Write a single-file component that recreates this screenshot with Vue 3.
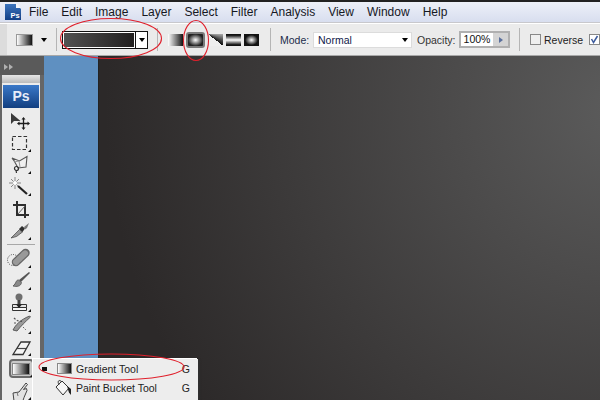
<script setup>
const menus = ['File', 'Edit', 'Image', 'Layer', 'Select', 'Filter', 'Analysis', 'View', 'Window', 'Help'];
</script>

<template>
  <div class="app">
    <div class="menubar">
      <svg class="ps-logo" width="18" height="18" viewBox="0 0 18 18">
        <defs>
          <linearGradient id="logoBlue" x1="0" y1="0" x2="0" y2="1">
            <stop offset="0" stop-color="#3d75bd" />
            <stop offset="1" stop-color="#123f85" />
          </linearGradient>
        </defs>
        <path d="M1 1h11l5 5v11H1z" fill="url(#logoBlue)" />
        <path d="M12 0l5 5h-5z" fill="#f4f6fb" />
        <text x="6.5" y="14.5" class="ps-logo-text">Ps</text>
      </svg>
      <span v-for="m in menus" :key="m" class="menu-item">{{ m }}</span>
    </div>

    <div class="options">
      <div class="grip"></div>
      <div class="tool-preset"></div>
      <span class="arrow preset-arrow"></span>
      <div class="sep"></div>
      <div class="gradient-picker">
        <div class="gradient-swatch"></div>
        <div class="picker-btn"><span class="arrow"></span></div>
      </div>
      <div class="sep sep-b"></div>
      <div class="types">
        <div class="type type-linear"></div>
        <div class="type type-radial"></div>
        <div class="type type-angle"></div>
        <div class="type type-reflected"></div>
        <div class="type type-diamond"></div>
      </div>
      <div class="sep sep-c"></div>
      <span class="label mode-label">Mode:</span>
      <div class="mode-select">
        <span>Normal</span>
        <span class="arrow"></span>
      </div>
      <span class="label opacity-label">Opacity:</span>
      <div class="opacity">
        <span class="opacity-val">100%</span>
        <div class="opacity-btn"></div>
      </div>
      <div class="sep sep-d"></div>
      <span class="check"></span>
      <span class="label check-label">Reverse</span>
      <span class="check checked">
        <svg width="9" height="9" viewBox="0 0 9 9"><path d="M1.5 4l2 3.5L7.5 1" fill="none" stroke="#3c5a9c" stroke-width="1.5" /></svg>
      </span>
    </div>

    <div class="workspace">
      <div class="dock">
        <div class="dock-head"><span class="tri"></span><span class="tri"></span></div>
        <div class="toolbox">
          <div class="toolbox-grip"></div>
          <div class="ps-badge">Ps</div>

          <!-- move -->
          <div class="tool">
            <svg width="30" height="22" viewBox="0 0 30 22">
              <path d="M5 4v11l3-3h6.5z" fill="#3a3a3a" />
              <path d="M17.5 10v9M13 14.5h9" stroke="#1c1c1c" stroke-width="1.3" />
              <path d="M17.5 8l2 2.5h-4zM17.5 21l2-2.5h-4zM11 14.5l2.5-2v4zM24 14.5l-2.5-2v4z" fill="#1c1c1c" />
            </svg>
          </div>
          <!-- marquee -->
          <div class="tool corner">
            <svg width="30" height="22" viewBox="0 0 30 22">
              <rect x="6.5" y="5.5" width="14" height="13" fill="none" stroke="#333" stroke-width="1.2" stroke-dasharray="3.5 2" />
            </svg>
          </div>
          <!-- lasso -->
          <div class="tool corner">
            <svg width="30" height="22" viewBox="0 0 30 22">
              <path d="M6 5l7.5 3L21 3.5l-1 10.5-8 1C10 12 9 8 6 5z" fill="#f0f0f0" stroke="#555" stroke-width="1.1" />
              <path d="M8 9l5-1 1 6" fill="none" stroke="#999" />
              <circle cx="10.5" cy="15.5" r="2" fill="none" stroke="#333" stroke-width="1.2" />
              <path d="M10 17l.5 3" stroke="#333" stroke-width="1.2" />
            </svg>
          </div>
          <!-- wand -->
          <div class="tool corner">
            <svg width="30" height="22" viewBox="0 0 30 22">
              <path d="M9 2v12M3 8h12M5 4l8 8M13 4l-8 8" stroke="#888" stroke-width="1" />
              <circle cx="9" cy="8" r="2" fill="#fff" />
              <path d="M12 11l9 8" stroke="#222" stroke-width="2.2" />
            </svg>
          </div>
          <!-- crop -->
          <div class="tool">
            <svg width="30" height="22" viewBox="0 0 30 22">
              <path d="M7 8h12v13M11 4v14h12" fill="none" stroke="#2e2e2e" stroke-width="2" />
              <path d="M12 17l7-8" stroke="#666" />
            </svg>
          </div>
          <!-- slice -->
          <div class="tool corner">
            <svg width="30" height="22" viewBox="0 0 30 22">
              <path d="M5 19l8.5-8.5 3 2.5-6 4.500z" fill="#999" stroke="#444" stroke-width=".7" />
              <path d="M13 10l3-3 3 2.5-2.5 3.5z" fill="#2e2e2e" />
              <path d="M18 8l5-4-2 5-2 1.5z" fill="#777" />
            </svg>
          </div>

          <div class="divider"></div>

          <!-- healing brush -->
          <div class="tool corner">
            <svg width="30" height="22" viewBox="0 0 30 22">
              <circle cx="7" cy="13" r="5.5" fill="none" stroke="#444" stroke-dasharray="1 1.3" />
              <path d="M10 15L19.5 6" stroke="#666" stroke-width="8.5" stroke-linecap="round" />
              <path d="M10 15L19.5 6" stroke="#999" stroke-width="6" stroke-linecap="round" stroke-dasharray="2 1.5" />
            </svg>
          </div>
          <!-- brush -->
          <div class="tool corner">
            <svg width="30" height="22" viewBox="0 0 30 22">
              <path d="M23 3l1 1-9 9-2-2z" fill="#555" />
              <path d="M12.5 11c-3 0-2 3.500-5.500 6 3.500 1 8 .5 8.500-3.500z" fill="#8a8a8a" stroke="#444" stroke-width=".7" />
            </svg>
          </div>
          <!-- stamp -->
          <div class="tool corner">
            <svg width="30" height="22" viewBox="0 0 30 22">
              <circle cx="13" cy="6" r="3.5" fill="#6e6e6e" />
              <rect x="11.5" y="9" width="3" height="4" fill="#444" />
              <path d="M6.5 13.5h14v3h-14z" fill="#e4e4e4" stroke="#333" />
              <path d="M6.5 16.5h14v3h-14z" fill="#f6f6f6" stroke="#333" />
              <path d="M10 13.5l3 3.5 3-3.5z" fill="#222" />
            </svg>
          </div>
          <!-- history brush -->
          <div class="tool corner">
            <svg width="30" height="22" viewBox="0 0 30 22">
              <path d="M7 17c2.5-5 7-10 16.5-14l1 1C19 9 15 13 11 18z" fill="#999" stroke="#444" stroke-width=".8" />
              <path d="M8 5c3 3 6 3.5 8 3.5M8 10h3" stroke="#555" stroke-width="1.2" stroke-dasharray="2 1.5" fill="none" />
              <path d="M17 14l3 3" stroke="#666" stroke-dasharray="1.5 1" />
            </svg>
          </div>
          <!-- eraser -->
          <div class="tool corner">
            <svg width="30" height="22" viewBox="0 0 30 22">
              <path d="M7 19.5L15 7h9l-7 12.5z" fill="#f5f5f5" stroke="#333" stroke-width="1.3" />
              <path d="M11 13.5h9" stroke="#444" stroke-width="1.2" />
            </svg>
          </div>
          <!-- gradient, the selected one -->
          <div class="tool corner gradient-tool"><div class="gradient-icon"></div></div>
          <!-- smudge -->
          <div class="tool corner">
            <svg width="30" height="22" viewBox="0 0 30 22">
              <path d="M8 22l-1-8 6-1 7-9 1.5 1.5-4 5 3-1 .5 2-3 7-1 3" fill="#e2e2e2" stroke="#444" />
              <path d="M11 13l1 4" stroke="#777" />
            </svg>
          </div>
        </div>
      </div>
      <div class="blue"></div>
      <div class="canvas"></div>
    </div>

    <div class="flyout">
      <div class="fly-row">
        <span class="bullet"></span>
        <div class="fly-gradient"></div>
        <span class="fly-name">Gradient Tool</span>
        <span class="fly-key">G</span>
      </div>
      <div class="fly-row">
        <span class="bullet bullet-off"></span>
        <svg class="fly-bucket" width="17" height="18" viewBox="0 0 17 18">
          <path d="M1 8l6-6 7 7-6 7z" fill="#f6f6f6" stroke="#333" />
          <path d="M7 3C4 0 2 2 4 6" fill="none" stroke="#333" />
          <path d="M12 7l4 3v6l-2-2.5-1-3z" fill="#222" />
        </svg>
        <span class="fly-name">Paint Bucket Tool</span>
        <span class="fly-key">G</span>
      </div>
    </div>

    <svg class="marks" width="600" height="400" viewBox="0 0 600 400">
      <ellipse cx="111" cy="38.5" rx="50.5" ry="20" />
      <ellipse cx="196" cy="40.5" rx="12.5" ry="20" />
      <ellipse cx="111.5" cy="367" rx="72.5" ry="13" />
    </svg>
  </div>
</template>

<style scoped>
.app {
  position: relative;
  width: 600px;
  height: 400px;
  display: flex;
  flex-direction: column;
  overflow: hidden;
  font-family: "Liberation Sans", Arial, sans-serif;
  font-size: 10.5px;
  color: #1a1a1a;
  background: #3a3a3a;
}

.menubar {
  height: 20px;
  flex: none;
  display: flex;
  align-items: center;
  gap: 13px;
  padding-left: 4px;
  border-top: 2px solid #222;
  border-bottom: 1px solid #c8c8cc;
  background: linear-gradient(#edf0f8, #d8deef);
  font-size: 12px;
}

.ps-logo {
  flex: none;
  margin-right: -6px;
}

.ps-logo-text {
  font: bold 7.5px "Liberation Sans", sans-serif;
  fill: #fff;
}

.menu-item {
  color: #16181f;
}

.options {
  height: 31px;
  flex: none;
  display: flex;
  align-items: center;
  background: #ebebeb;
  border-top: 1px solid #fff;
  border-bottom: 1px solid #a8a8a8;
}

.grip {
  width: 7px;
  height: 100%;
  background: #dcdcdc;
}

.tool-preset {
  width: 15px;
  height: 10px;
  margin-left: 9px;
  background: linear-gradient(90deg, #fff, #111);
  border: 1px solid #999;
}

.arrow {
  display: inline-block;
  width: 0;
  height: 0;
  flex: none;
  border-left: 3.5px solid transparent;
  border-right: 3.5px solid transparent;
  border-top: 4px solid #000;
}

.preset-arrow {
  margin-left: 8px;
}

.sep {
  width: 1px;
  height: 23px;
  flex: none;
  background: #b5b5b5;
  margin-left: 9px;
}

.gradient-picker {
  display: flex;
  width: 86px;
  height: 18px;
  flex: none;
  margin-left: 5px;
  box-sizing: border-box;
  border: 1px solid #111;
  background: #fff;
}

.gradient-swatch {
  width: 70px;
  margin: 1px;
  background: linear-gradient(90deg, #525252, #201e1e);
}

.picker-btn {
  flex: 1;
  display: flex;
  align-items: center;
  justify-content: center;
  border-left: 1px solid #111;
}

.sep-b {
  margin-left: 9px;
}

.types {
  display: flex;
  align-items: center;
  gap: 3px;
  margin-left: 10px;
}

.type {
  width: 15px;
  height: 12px;
  flex: none;
}

.type-linear {
  background: linear-gradient(90deg, #fff, #111);
}

.type-radial {
  width: 19px;
  height: 16px;
  box-sizing: border-box;
  background: radial-gradient(ellipse closest-side, #fff, #222 100%);
  border: 2px solid #7a7a7a;
  border-radius: 3px;
}

.type-angle {
  background: conic-gradient(from 90deg at 0 0, #aaa 0deg, #111 38deg, #eee 38deg 90deg);
}

.type-reflected {
  background: linear-gradient(#111 10%, #fff 50%, #111 90%);
}

.type-diamond {
  background: radial-gradient(ellipse closest-side, #fff, #111 85%);
}

.sep-c {
  margin-left: 11px;
}

.label {
  font-size: 10.5px;
  flex: none;
  color: #1c2c4c;
}

.mode-label {
  margin-left: 9px;
  width: 33px;
}

.mode-select {
  width: 99px;
  height: 16px;
  flex: none;
  padding: 0 3px 0 4px;
  box-sizing: border-box;
  display: flex;
  align-items: center;
  justify-content: space-between;
  background: #fff;
  border: 1px solid #dcdcdc;
  color: #10204a;
}

.opacity-label {
  margin-left: 5px;
  width: 38px;
  color: #333;
}

.opacity {
  display: flex;
  width: 51px;
  height: 17px;
  flex: none;
  margin-left: 4px;
  box-sizing: border-box;
  background: #fff;
  border: 2px solid #b0b0b0;
}

.opacity-val {
  flex: 1;
  text-align: center;
  line-height: 13px;
  color: #111;
}

.opacity-btn {
  width: 15px;
  background: #d4d4d4;
  position: relative;
}

.opacity-btn::after {
  content: "";
  position: absolute;
  left: 6px;
  top: 4px;
  border-left: 4px solid #5a6f9c;
  border-top: 3px solid transparent;
  border-bottom: 3px solid transparent;
}

.sep-d {
  margin-left: 9px;
}

.check {
  width: 9px;
  height: 9px;
  margin-left: 10px;
  flex: none;
  background: #efefef;
  border: 1px solid #888;
}

.check-label {
  margin-left: 3px;
  width: 45px;
  color: #222;
}

.checked {
  margin-left: 0;
  display: flex;
  background: #fff;
}

.workspace {
  flex: 1;
  display: flex;
  min-height: 0;
}

.dock {
  width: 44px;
  flex: none;
  display: flex;
  flex-direction: column;
  background: #666;
}

.dock-head {
  height: 19px;
  flex: none;
  display: flex;
  align-items: center;
  gap: 1px;
  padding: 3px 0 0 4px;
  box-sizing: border-box;
  background: #5a5a5a;
}

.tri {
  border-left: 4px solid #b0b0b0;
  border-top: 3.5px solid transparent;
  border-bottom: 3.5px solid transparent;
}

.toolbox {
  width: 38px;
  flex: 1;
  margin-left: 2px;
  background: #ececec;
  display: flex;
  flex-direction: column;
  align-items: center;
}

.toolbox-grip {
  width: 100%;
  height: 8px;
  flex: none;
  background: linear-gradient(#e6e6e6, #bbb);
}

.ps-badge {
  width: 36px;
  height: 23px;
  flex: none;
  margin-top: 2px;
  margin-bottom: 1px;
  background: linear-gradient(#3a78c8, #123f80);
  color: #e6ecf8;
  font: bold 14px "Liberation Sans", sans-serif;
  text-align: center;
  line-height: 23px;
}

.tool {
  width: 30px;
  height: 22px;
  flex: none;
  display: flex;
  align-items: center;
  justify-content: center;
  position: relative;
}

.corner::after {
  content: "";
  position: absolute;
  right: 5px;
  bottom: 1px;
  border-left: 3px solid transparent;
  border-bottom: 3px solid #111;
}

.divider {
  width: 28px;
  height: 1px;
  flex: none;
  background: #a8a8a8;
  margin: 3px 0 2px;
}

.gradient-tool {
  height: 19px;
  width: 25px;
  margin: 2px 0 1px;
  box-sizing: border-box;
  border: 2px solid #6a6a6a;
  border-radius: 4px;
  background: #c8c8c8;
}

.gradient-tool.corner::after {
  right: -1px;
  bottom: -1px;
}

.gradient-icon {
  width: 16px;
  height: 10px;
  background: linear-gradient(90deg, #fff, #111);
  border: 1px solid #888;
}

.blue {
  width: 54px;
  flex: none;
  background: #5f90c1;
}

.canvas {
  flex: 1;
  background: radial-gradient(circle 520px at 105% 15%, #5c5c5c, #2c2929 100%);
  border-left: 1px solid #232323;
}

.flyout {
  position: absolute;
  left: 33px;
  top: 359px;
  width: 165px;
  height: 46px;
  padding-left: 9px;
  box-sizing: border-box;
  background: #ededed;
  box-shadow: -1px -1px 0 #fff, 1px 1px 2px #333;
}

.fly-row {
  height: 19px;
  display: flex;
  align-items: center;
  color: #222;
}

.bullet {
  width: 5px;
  height: 4px;
  background: #111;
  flex: none;
}

.bullet-off {
  visibility: hidden;
}

.fly-gradient {
  width: 13px;
  height: 9px;
  margin-left: 10px;
  flex: none;
  border: 1px solid #888;
  background: linear-gradient(90deg, #fff, #111);
}

.fly-bucket {
  margin-left: 8px;
  flex: none;
}

.fly-name {
  margin-left: 4px;
  flex: 1;
}

.fly-key {
  margin-right: 8px;
}

.marks {
  position: absolute;
  left: 0;
  top: 0;
  pointer-events: none;
}

.marks ellipse {
  fill: none;
  stroke: #e0202c;
  stroke-width: 1.1;
}
</style>
